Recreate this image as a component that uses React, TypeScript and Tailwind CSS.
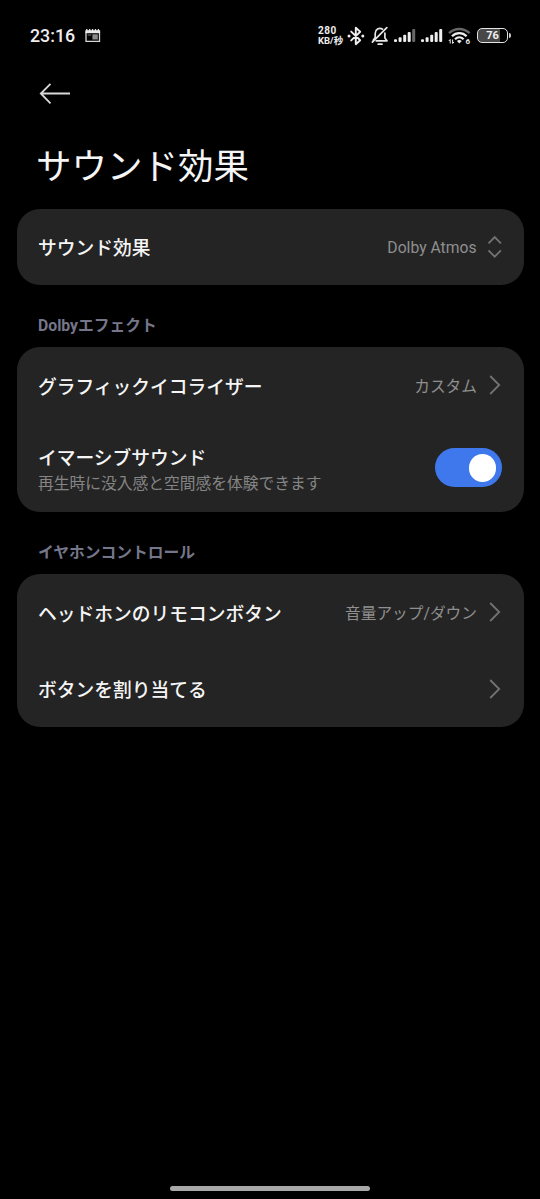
import type { ReactNode } from "react";

function CalendarIcon() {
  return (
    <svg className="ml-[9.5px] mb-px shrink-0" width="16" height="15" viewBox="0 0 16 15" fill="none">
      <path d="M1 3.5v9.8h13.5V3.5" stroke="#d8d8d8" strokeWidth="1.3" />
      <path d="M.4 2.2h14.7v3H.4z" fill="#e8e8e8" />
      <path d="M1.8.9v2M4.7.9v2M7.6.9v2M10.5.9v2M13.4.9v2" stroke="#e8e8e8" strokeWidth="1.3" />
      <path d="M2.6 7h3.8" stroke="#999" strokeWidth=".8" />
      <path d="M7.4 6.3h5.4v5.2H7.4z" fill="#8a8a8a" />
    </svg>
  );
}

function BluetoothIcon() {
  return (
    <svg className="ml-[4px] shrink-0" width="18" height="20" viewBox="0 0 18 20" fill="none">
      <path d="M4.2 5.6l9 8.6-4.4 4V1.8l4.4 4-9 8.6" stroke="#eee" strokeWidth="1.9" strokeLinejoin="round" strokeLinecap="round" />
      <circle cx="2" cy="10" r="1.5" fill="#eee" />
      <circle cx="15.8" cy="10" r="1.5" fill="#eee" />
    </svg>
  );
}

function MutedBellIcon() {
  return (
    <svg className="ml-[6px] shrink-0" width="18" height="20" viewBox="0 0 18 20" fill="none" stroke="#e6e6e6" strokeWidth="1.7" strokeLinecap="round" strokeLinejoin="round">
      <path d="M11.6 3.2C8 1.2 4.2 3.4 4.2 7.4v4.2l-2 2.6" />
      <path d="M5.2 14.8h10.8l-2.1-2.8V7.2" />
      <path d="M1.4 16.2L15.8 1.6" />
      <path d="M7.2 18.2h3.8" />
    </svg>
  );
}

function SignalIcon({ dim = false }: { dim?: boolean }) {
  return (
    <svg className="shrink-0" width="22" height="15" viewBox="0 0 22 15" fill="#eee">
      <rect x="0" y="11.2" width="3" height="2.8" rx="1" />
      <rect x="4.6" y="9.2" width="3" height="4.8" rx="1" />
      <rect x="9.2" y="6.8" width="3" height="7.2" rx="1" />
      <rect x="13.7" y="4" width="3" height="10" rx="1" />
      <rect x="18.2" y="1" width="3" height="13" rx="1" fill={dim ? "#686868" : "#eee"} />
    </svg>
  );
}

function WifiIcon() {
  return (
    <svg className="ml-[5px] shrink-0" width="23" height="18" viewBox="0 0 23 18" fill="none">
      <path d="M1 6.2C6.8.6 15.8.6 21.6 6.2" stroke="#666" strokeWidth="2.3" />
      <path d="M4 9.2c4.2-4.2 10.4-4.2 14.6 0" stroke="#eee" strokeWidth="2.3" />
      <path d="M7 12.2c2.6-2.6 6-2.6 8.6 0" stroke="#eee" strokeWidth="2.2" />
      <path d="M8.9 14.1c1.5-1.4 3.3-1.4 4.8 0l-2.4 2.5z" fill="#eee" />
      <path d="M2.2 16.5v-4L.8 14M4.6 12.5v4L6 15" stroke="#eee" strokeWidth="1" />
      <text x="17.4" y="17" fill="#eee" className="font-['Roboto'] text-[8px] font-bold">6</text>
    </svg>
  );
}

function Battery() {
  return (
    <div className="ml-[6px] flex items-center">
      <div className="flex h-[15px] w-[31px] items-center justify-center rounded-[5px] border-[1.5px] border-[#e4e4e4] bg-linear-to-r from-[#484848] from-75% to-black to-75% font-['Roboto'] text-[11px] font-bold leading-none text-[#f2f2f2]">
        76
      </div>
      <div className="ml-px h-[5px] w-[1.5px] rounded-r-sm bg-[#ccc]" />
    </div>
  );
}

function Chevron() {
  return (
    <svg className="ml-[12px] shrink-0" width="13" height="20" viewBox="0 0 13 20" fill="none">
      <path d="M1.2 1l9 9-9 9" stroke="#727272" strokeWidth="1.8" />
    </svg>
  );
}

function UpDown() {
  return (
    <svg className="ml-[10px] shrink-0" width="15.5" height="24" viewBox="0 0 15.5 24" fill="none" stroke="#727272" strokeWidth="1.9">
      <path d="M1.5 8.4l6.2-6.2 6.2 6.2M1.5 15.4l6.2 6.2 6.2-6.2" />
    </svg>
  );
}

function Row({ title, value, icon }: { title: string; value?: string; icon: ReactNode }) {
  return (
    <button className="flex h-[76.5px] w-full items-center text-left">
      <span className="flex-1 pt-[5px] text-[18.75px] font-medium leading-7 text-[#f5f5f5]">{title}</span>
      {value && <span className="pt-[3px] text-[15.7px] leading-6 text-[#8f8f8f]">{value}</span>}
      {icon}
    </button>
  );
}

function Card({ children }: { children: ReactNode }) {
  return <div className="rounded-[23px] bg-[#242424] pl-[21.5px] pr-[21.5px]">{children}</div>;
}

function SectionTitle({ children }: { children: ReactNode }) {
  return (
    <h2 className="flex h-[62px] items-center pl-[21.5px] pt-[19px] text-[15.75px] font-bold leading-6 text-[#75768a]">
      {children}
    </h2>
  );
}

export default function App() {
  return (
    <div lang="ja" className="flex h-[1199px] w-[540px] flex-col overflow-hidden bg-black font-['Roboto','Noto_Sans_CJK_JP',sans-serif]">
      <header className="flex h-[71px] shrink-0 items-center pl-[30px] pr-[29.5px] text-[#eee]">
        <span className="text-[17.8px] font-medium leading-none">23:16</span>
        <CalendarIcon />
        <div className="ml-auto w-[25px] whitespace-nowrap text-[9.5px] font-bold leading-[9.5px]">
          <div className="text-[10px] tracking-[0.5px]">280</div>
          <div>KB/秒</div>
        </div>
        <BluetoothIcon />
        <MutedBellIcon />
        <div className="ml-[5px] flex gap-[5px]">
          <SignalIcon dim />
          <SignalIcon />
        </div>
        <WifiIcon />
        <Battery />
      </header>

      <div className="flex h-[45px] shrink-0 items-center pl-[39px]">
        <svg width="32" height="22" viewBox="0 0 32 22" fill="none" stroke="#d8d8d8" strokeWidth="1.8">
          <path d="M31 10.5H2M11.5.8L1.8 10.5l9.7 9.8" />
        </svg>
      </div>

      <h1 className="flex h-[92.5px] shrink-0 items-center pl-[36px] pt-[11px] text-[35.5px] leading-none text-[#f5f5f5]">サウンド効果</h1>

      <main className="px-[16.5px]">
        <Card>
          <Row title="サウンド効果" value="Dolby Atmos" icon={<UpDown />} />
        </Card>

        <SectionTitle>Dolbyエフェクト</SectionTitle>
        <Card>
          <Row title="グラフィックイコライザー" value="カスタム" icon={<Chevron />} />
          <div className="flex h-[88.5px] items-center justify-between">
            <div className="pt-[5.5px]">
              <div className="text-[18.75px] font-medium leading-[26px] text-[#f5f5f5]">イマーシブサウンド</div>
              <div className="text-[15.75px] leading-6 text-[#858585]">再生時に没入感と空間感を体験できます</div>
            </div>
            <button role="switch" aria-checked="true" className="flex h-[39px] w-[67.5px] items-center justify-end rounded-full bg-[#3f78ed] pr-[6px]">
              <span className="size-[27.5px] rounded-full bg-white" />
            </button>
          </div>
        </Card>

        <SectionTitle>イヤホンコントロール</SectionTitle>
        <Card>
          <Row title="ヘッドホンのリモコンボタン" value="音量アップ/ダウン" icon={<Chevron />} />
          <Row title="ボタンを割り当てる" icon={<Chevron />} />
        </Card>
      </main>

      <div className="mb-[8px] mt-auto h-[5px] w-[200px] shrink-0 self-center rounded-full bg-[#a8a8a8]" />
    </div>
  );
}
